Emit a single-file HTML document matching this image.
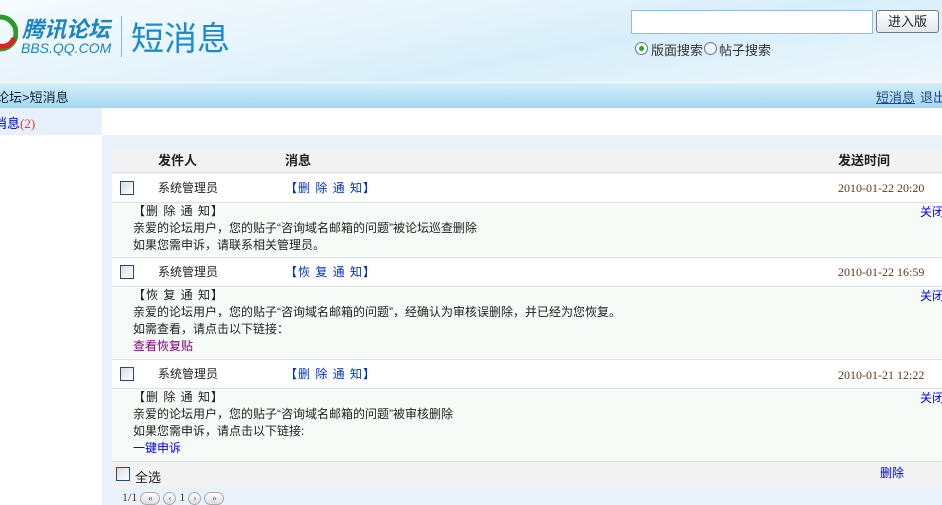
<!DOCTYPE html>
<html><head><meta charset="utf-8"><style>
*{margin:0;padding:0;box-sizing:border-box}
body{width:942px;height:505px;overflow:hidden;position:relative;font-family:"Liberation Sans","Noto Sans CJK SC","WenQuanYi Zen Hei",sans-serif;font-size:12px;color:#222;background:#fff}
.a{position:absolute;white-space:nowrap}
.hdr{left:0;top:0;width:942px;height:82px;background:linear-gradient(170deg,#f6fbfe 0%,#e4f3fb 40%,#d7eefa 60%,#eef7fc 100%)}
.nav{left:0;top:82px;width:942px;height:26px;background:linear-gradient(#d4eefb,#a6d7f1);border-top:1px solid #fff;font-size:13px;color:#123}
.cb{width:14px;height:14px;border:1px solid #1d4f80;background:linear-gradient(135deg,#dcdcdc,#fff)}
.blue{color:#0000ee}
.date{font-family:"Liberation Serif",serif;color:#5a3a20;font-size:12px}
.line{left:112px;width:830px;height:1px;background:#dde3e0}
.det{left:112px;width:830px;background:#f6fbf7}
.pg{display:inline-block;height:13px;border:1px solid #aaa;border-radius:7px;background:linear-gradient(#fff,#ddd);vertical-align:middle;font-size:9px;text-align:center;line-height:11px;color:#555}
.t{letter-spacing:1px}
</style></head><body>
<div class="a hdr"></div>
<svg class="a" style="left:0;top:8px" width="18" height="50"><circle cx="0" cy="25" r="16" fill="none" stroke="#2e9a2e" stroke-width="5"/><path d="M-2 38 Q10 40 14 30" stroke="#d22" stroke-width="5" fill="none"/></svg>
<div class="a" style="left:22px;top:12px;font-size:22px;font-style:italic;font-weight:bold;color:#1a84c4">腾讯论坛</div>
<div class="a" style="left:21px;top:40px;font-size:14px;font-style:italic;color:#1a84c4">BBS.QQ.COM</div>
<div class="a" style="left:121px;top:16px;width:1px;height:41px;background:#7fb7d6"></div>
<div class="a" style="left:131px;top:12px;font-size:33px;color:#1a8ccd">短消息</div>
<div class="a" style="left:631px;top:10px;width:242px;height:24px;border:1px solid #8fbbe6;background:#fff"></div>
<div class="a" style="left:876px;top:10px;width:63px;height:23px;border:1px solid #6a7a8a;border-radius:3px;background:linear-gradient(#fff,#e3e6ea);font-size:13px;text-align:center;line-height:21px">进入版</div>
<div class="a" style="left:635px;top:42px;width:13px;height:13px;border:1px solid #5a7a9a;border-radius:50%;background:#fff"><div style="margin:3px;width:5px;height:5px;border-radius:50%;background:#2a2"></div></div>
<div class="a" style="left:651px;top:40px;font-size:13px;color:#333">版面搜索</div>
<div class="a" style="left:704px;top:42px;width:13px;height:13px;border:1px solid #5a7a9a;border-radius:50%;background:#f4f4f4"></div>
<div class="a" style="left:719px;top:40px;font-size:13px;color:#333">帖子搜索</div>
<div class="a nav"></div>
<div class="a" style="left:-4px;top:87px;font-size:13px;color:#123">论坛&gt;短消息</div>
<div class="a" style="left:876px;top:87px;font-size:13px;color:#1a4a8a;text-decoration:underline">短消息</div>
<div class="a" style="left:920px;top:87px;font-size:13px;color:#1a4a8a">退出</div>
<div class="a" style="left:0;top:108px;width:102px;height:27px;background:#e6f1fb"></div>
<div class="a" style="left:-6px;top:113px;font-size:13px;color:#0000cc">消息<span style="color:#e33;font-family:'Liberation Serif',serif">(2)</span></div>
<div class="a" style="left:102px;top:135px;width:840px;height:370px;background:#e9f1fb"></div>
<div class="a" style="left:112px;top:147px;width:830px;height:26px;background:#f2f2f2;border-bottom:1px solid #dde"></div>
<div class="a" style="left:158px;top:150px;font-weight:bold;font-size:13px">发件人</div>
<div class="a" style="left:285px;top:150px;font-weight:bold;font-size:13px">消息</div>
<div class="a" style="left:838px;top:150px;font-weight:bold;font-size:13px">发送时间</div>

<div class="a" style="left:112px;top:174px;width:830px;height:28px;background:#fff"></div>
<div class="a cb" style="left:120px;top:181px"></div>
<div class="a" style="left:158px;top:179px">系统管理员</div>
<div class="a t" style="left:285px;top:179px;color:#0033cc">【删 除 通 知】</div>
<div class="a date" style="left:838px;top:181px">2010-01-22 20:20</div>
<div class="a line" style="top:202px"></div>
<div class="a det" style="top:203px;height:54px"></div>
<div class="a blue" style="left:920px;top:203px">关闭</div>
<div class="a" style="left:133px;top:203px;line-height:17px"><span class="t">【删 除 通 知】</span><br>亲爱的论坛用户，您的贴子“咨询域名邮箱的问题”被论坛巡查删除<br>如果您需申诉，请联系相关管理员。</div>
<div class="a line" style="top:257px"></div>

<div class="a" style="left:112px;top:258px;width:830px;height:28px;background:#fff"></div>
<div class="a cb" style="left:120px;top:265px"></div>
<div class="a" style="left:158px;top:263px">系统管理员</div>
<div class="a t" style="left:285px;top:263px;color:#0033cc">【恢 复 通 知】</div>
<div class="a date" style="left:838px;top:265px">2010-01-22 16:59</div>
<div class="a line" style="top:286px"></div>
<div class="a det" style="top:287px;height:72px"></div>
<div class="a blue" style="left:920px;top:287px">关闭</div>
<div class="a" style="left:133px;top:287px;line-height:17px"><span class="t">【恢 复 通 知】</span><br>亲爱的论坛用户，您的贴子“咨询域名邮箱的问题”，经确认为审核误删除，并已经为您恢复。<br>如需查看，请点击以下链接：<br><span style="color:#800080">查看恢复贴</span></div>
<div class="a line" style="top:359px"></div>

<div class="a" style="left:112px;top:360px;width:830px;height:28px;background:#fff"></div>
<div class="a cb" style="left:120px;top:367px"></div>
<div class="a" style="left:158px;top:365px">系统管理员</div>
<div class="a t" style="left:285px;top:365px;color:#0033cc">【删 除 通 知】</div>
<div class="a date" style="left:838px;top:368px">2010-01-21 12:22</div>
<div class="a line" style="top:388px"></div>
<div class="a det" style="top:389px;height:72px"></div>
<div class="a blue" style="left:920px;top:389px">关闭</div>
<div class="a" style="left:133px;top:389px;line-height:17px"><span class="t">【删 除 通 知】</span><br>亲爱的论坛用户，您的贴子“咨询域名邮箱的问题”被审核删除<br>如果您需申诉，请点击以下链接:<br><span class="blue">一键申诉</span></div>
<div class="a line" style="top:461px"></div>
<div class="a" style="left:112px;top:462px;width:830px;height:25px;background:#f2f2f2"></div>
<div class="a cb" style="left:116px;top:467px"></div>
<div class="a" style="left:135px;top:467px;font-size:13px">全选</div>
<div class="a blue" style="left:880px;top:464px">删除</div>
<div class="a" style="left:122px;top:490px;font-family:'Liberation Serif',serif;color:#5a3a20">1/1 <span class="pg" style="width:20px">«</span> <span class="pg" style="width:13px">‹</span> 1 <span class="pg" style="width:13px">›</span> <span class="pg" style="width:20px">»</span></div>
</body></html>
